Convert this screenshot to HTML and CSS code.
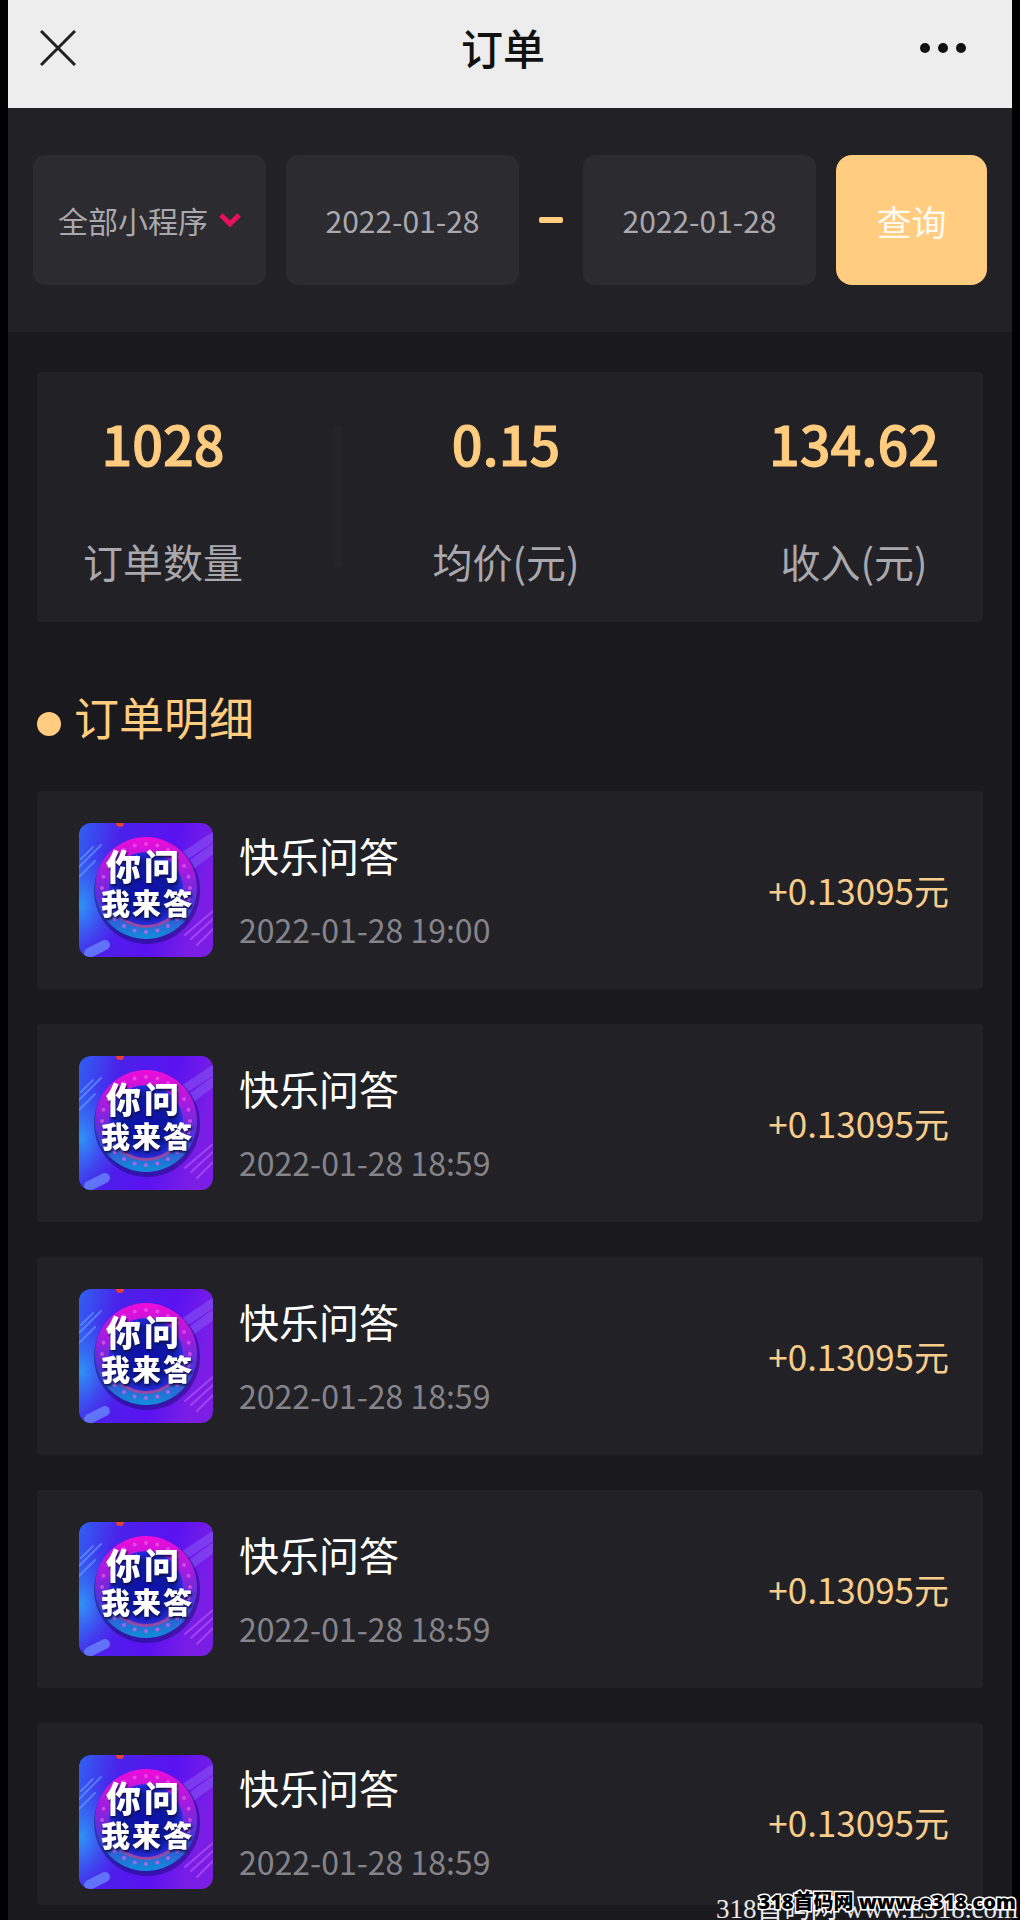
FILE: index.html
```html
<!DOCTYPE html>
<html lang="zh-CN">
<head>
<meta charset="utf-8">
<meta name="viewport" content="width=device-width, initial-scale=1">
<title>订单</title>
<link rel="stylesheet" href="styles.css">
</head>
<body>
<svg class="defs" aria-hidden="true">
  <defs>
    <linearGradient id="bg" x1="0" y1="0" x2="1" y2="0.25">
      <stop offset="0" stop-color="#2f62f2"/><stop offset="0.3" stop-color="#4a22ea"/>
      <stop offset="0.7" stop-color="#5a12f0"/><stop offset="1" stop-color="#7a1ee6"/>
    </linearGradient>
    <linearGradient id="ring" x1="0" y1="0" x2="0" y2="1">
      <stop offset="0" stop-color="#f00cd8"/><stop offset="0.35" stop-color="#a01ce0"/>
      <stop offset="0.65" stop-color="#4a35d8"/><stop offset="1" stop-color="#0f8fd8"/>
    </linearGradient>
    <radialGradient id="core">
      <stop offset="0" stop-color="#1010b0"/><stop offset="0.7" stop-color="#0c1a9c"/><stop offset="1" stop-color="#2a2ce0"/>
    </radialGradient>
    <radialGradient id="side">
      <stop offset="0" stop-color="#2f9cf8"/><stop offset="1" stop-color="#2f6cf4" stop-opacity="0"/>
    </radialGradient>
    <symbol id="badge" viewBox="0 0 134 134">
      <rect width="134" height="134" fill="url(#bg)"/>
      <ellipse cx="2" cy="82" rx="42" ry="56" fill="url(#side)" opacity=".9"/>
      <g stroke-linecap="round">
        <path d="M0 44L22 22M0 54L16 38M2 36L14 24" stroke="#6aa0ff" stroke-width="2" opacity=".6"/>
        <path d="M104 34L134 14M112 42L134 26" stroke="#8a5cf4" stroke-width="9" opacity=".5"/>
        <path d="M10 130L26 122" stroke="#6a8cff" stroke-width="10" opacity=".75"/>
        <path d="M112 116L134 96M118 122L134 106M106 112L134 88" stroke="#b04cf0" stroke-width="2" opacity=".8"/>
      </g>
      <circle cx="41" cy="0" r="4" fill="#e8402c"/>
      <circle cx="68" cy="68" r="53" fill="#10106a" opacity=".5"/>
      <circle cx="67" cy="65" r="51" fill="url(#ring)"/>
      <circle cx="67" cy="65" r="44" fill="none" stroke="#f060e8" stroke-width="4" stroke-linecap="round" stroke-dasharray="0 11.5" opacity=".65"/>
      <circle cx="67" cy="66" r="37" fill="url(#core)"/>
      <path d="M42 95Q67 112 92 95" fill="none" stroke="#b04498" stroke-width="3" opacity=".8"/>
    </symbol>
  </defs>
</svg>

<div class="page">
  <header class="topbar">
    <button class="icon-button" type="button" aria-label="关闭">
      <svg width="36" height="36" viewBox="0 0 36 36"><path d="M1 1L35 35M35 1L1 35" stroke="#222" stroke-width="3" fill="none"/></svg>
    </button>
    <h1 class="title">订单</h1>
    <button class="icon-button" type="button" aria-label="更多">
      <svg width="46" height="10" viewBox="0 0 46 10" fill="#111"><circle cx="5" cy="5" r="5"/><circle cx="23" cy="5" r="5"/><circle cx="41" cy="5" r="5"/></svg>
    </button>
  </header>

  <form class="filters">
    <div class="field picker">
      <select class="picker-select" aria-label="小程序"><option>全部小程序</option></select>
      <svg class="chevron" width="22" height="16" viewBox="0 0 22 16"><path d="M2 3L11 12L20 3" stroke="#e80f5c" stroke-width="5" fill="none"/></svg>
    </div>
    <input class="field date" type="text" aria-label="开始日期" value="2022-01-28">
    <span class="dash"></span>
    <input class="field date" type="text" aria-label="结束日期" value="2022-01-28">
    <button class="query" type="button">查询</button>
  </form>

  <main class="content">
    <section class="stats">
      <div class="stat"><strong class="value">1028</strong><span class="label">订单数量</span></div>
      <span class="divider"></span>
      <div class="stat"><strong class="value">0.15</strong><span class="label">均价(元)</span></div>
      <span class="divider clear"></span>
      <div class="stat"><strong class="value">134.62</strong><span class="label">收入(元)</span></div>
    </section>

    <h2 class="heading">订单明细</h2>

    <ul class="orders">
      <li class="order">
        <svg class="badge" viewBox="0 0 134 134"><use href="#badge"/><g class="badge-text"><text x="27 65" y="57" font-size="35">你问</text><text x="22 53 84" y="92" font-size="29">我来答</text></g></svg>
        <div class="info"><h3 class="name">快乐问答</h3><time class="time">2022-01-28 19:00</time></div>
        <span class="amount">+0.13095元</span>
      </li>
      <li class="order">
        <svg class="badge" viewBox="0 0 134 134"><use href="#badge"/><g class="badge-text"><text x="27 65" y="57" font-size="35">你问</text><text x="22 53 84" y="92" font-size="29">我来答</text></g></svg>
        <div class="info"><h3 class="name">快乐问答</h3><time class="time">2022-01-28 18:59</time></div>
        <span class="amount">+0.13095元</span>
      </li>
      <li class="order">
        <svg class="badge" viewBox="0 0 134 134"><use href="#badge"/><g class="badge-text"><text x="27 65" y="57" font-size="35">你问</text><text x="22 53 84" y="92" font-size="29">我来答</text></g></svg>
        <div class="info"><h3 class="name">快乐问答</h3><time class="time">2022-01-28 18:59</time></div>
        <span class="amount">+0.13095元</span>
      </li>
      <li class="order">
        <svg class="badge" viewBox="0 0 134 134"><use href="#badge"/><g class="badge-text"><text x="27 65" y="57" font-size="35">你问</text><text x="22 53 84" y="92" font-size="29">我来答</text></g></svg>
        <div class="info"><h3 class="name">快乐问答</h3><time class="time">2022-01-28 18:59</time></div>
        <span class="amount">+0.13095元</span>
      </li>
      <li class="order">
        <svg class="badge" viewBox="0 0 134 134"><use href="#badge"/><g class="badge-text"><text x="27 65" y="57" font-size="35">你问</text><text x="22 53 84" y="92" font-size="29">我来答</text></g></svg>
        <div class="info"><h3 class="name">快乐问答</h3><time class="time">2022-01-28 18:59</time></div>
        <span class="amount">+0.13095元</span>
      </li>
    </ul>
  </main>
  <span class="mark mark-serif">318首码网 www.E318.com</span>
  <span class="mark mark-outline">318首码网 www.e318.com</span>
</div>
</body>
</html>
```
FILE: styles.css
```css
* { box-sizing: border-box; }

body {
  margin: 0;
  background: #000;
  font-family: "Noto Sans CJK SC", sans-serif;
  color: #fff;
}

h1, h2, h3, ul { margin: 0; padding: 0; font-weight: 400; }
ul { list-style: none; }
button, input, select { font: inherit; border: 0; padding: 0; margin: 0; }

.defs { position: absolute; width: 0; height: 0; }

.page {
  position: relative;
  overflow: hidden;
  padding: 0 8px;
}

.topbar {
  display: flex;
  align-items: center;
  justify-content: space-between;
  height: 108px;
  padding: 0 46px 12px 32px;
  background: #ededed;
}

.icon-button { display: flex; width: 46px; background: none; }
.title { padding-bottom: 2px; font-size: 42px; line-height: 60px; font-weight: 500; color: #111; }

.filters {
  display: grid;
  grid-template-columns: minmax(0, 1fr) minmax(0, 1fr) 24px minmax(0, 1fr) 151px;
  align-items: center;
  gap: 20px;
  padding: 47px 25px;
  background: #222126;
}

.field {
  width: 100%;
  height: 130px;
  border-radius: 12px;
  background: #2c2b30;
  color: #a9a8ad;
  font-size: 30px;
}

.picker { display: flex; align-items: center; justify-content: space-between; padding: 0 25px; }
.picker-select { appearance: none; background: none; color: inherit; line-height: 44px; }
.chevron { flex: none; }
.date { text-align: center; }
.dash { height: 6px; border-radius: 2px; background: #ffcc80; }

.query {
  height: 130px;
  border-radius: 16px;
  background: #ffcc80;
  color: #fffaf0;
  font-size: 35px;
}

.content { padding: 40px 29px 16px; background: #1a191e; }

.stats {
  display: flex;
  align-items: center;
  justify-content: space-between;
  height: 250px;
  padding: 0 44px 0 46px;
  border-radius: 4px;
  background: #222126;
}

.stat { display: flex; flex-direction: column; align-items: center; gap: 48px; }
.value { font-size: 54px; line-height: 80px; font-weight: 500; color: #ffcc80; -webkit-text-stroke: 1px #ffcc80; }
.label { font-size: 40px; line-height: 60px; color: #a9a8ad; }
.divider { width: 8px; height: 140px; background: #252429; }
.clear { background: none; }

.heading {
  display: flex;
  align-items: center;
  gap: 13px;
  padding: 62px 0 42px;
  font-size: 45px;
  line-height: 65px;
  color: #ffcc80;
}
.heading::before {
  content: "";
  width: 24px;
  height: 24px;
  margin-top: 14px;
  border-radius: 50%;
  background: #ffcc80;
}

.orders { display: grid; gap: 35px; }
.order {
  display: flex;
  align-items: center;
  gap: 26px;
  padding: 32px 34px 32px 42px;
  border-radius: 4px;
  background: #222126;
}
.order:last-child { padding-bottom: 16px; }

.badge { flex: none; width: 134px; height: 134px; border-radius: 12px; }
.badge-text {
  fill: #fff;
  font-weight: 900;
  filter: drop-shadow(1px 2px 1px #10104a);
}

.info { flex: 1; padding-bottom: 4px; }
.name { font-size: 40px; line-height: 60px; }
.time { display: block; margin-top: 22px; font-size: 32px; line-height: 44px; color: #85848a; }
.amount { font-size: 35px; line-height: 52px; color: #f8cd8c; }

.mark { position: absolute; white-space: nowrap; }
.mark-serif {
  left: 716px;
  bottom: -4px;
  font-family: "Liberation Serif", "Noto Sans CJK SC", serif;
  font-size: 27px;
  line-height: 32px;
  color: #e8e8e8;
}
.mark-outline {
  right: 4px;
  bottom: 4px;
  font-family: "Open Sans", "Noto Sans CJK SC", sans-serif;
  font-size: 20px;
  line-height: 30px;
  font-weight: 800;
  color: #000;
  -webkit-text-stroke: 3px #fff;
  paint-order: stroke fill;
}
```
